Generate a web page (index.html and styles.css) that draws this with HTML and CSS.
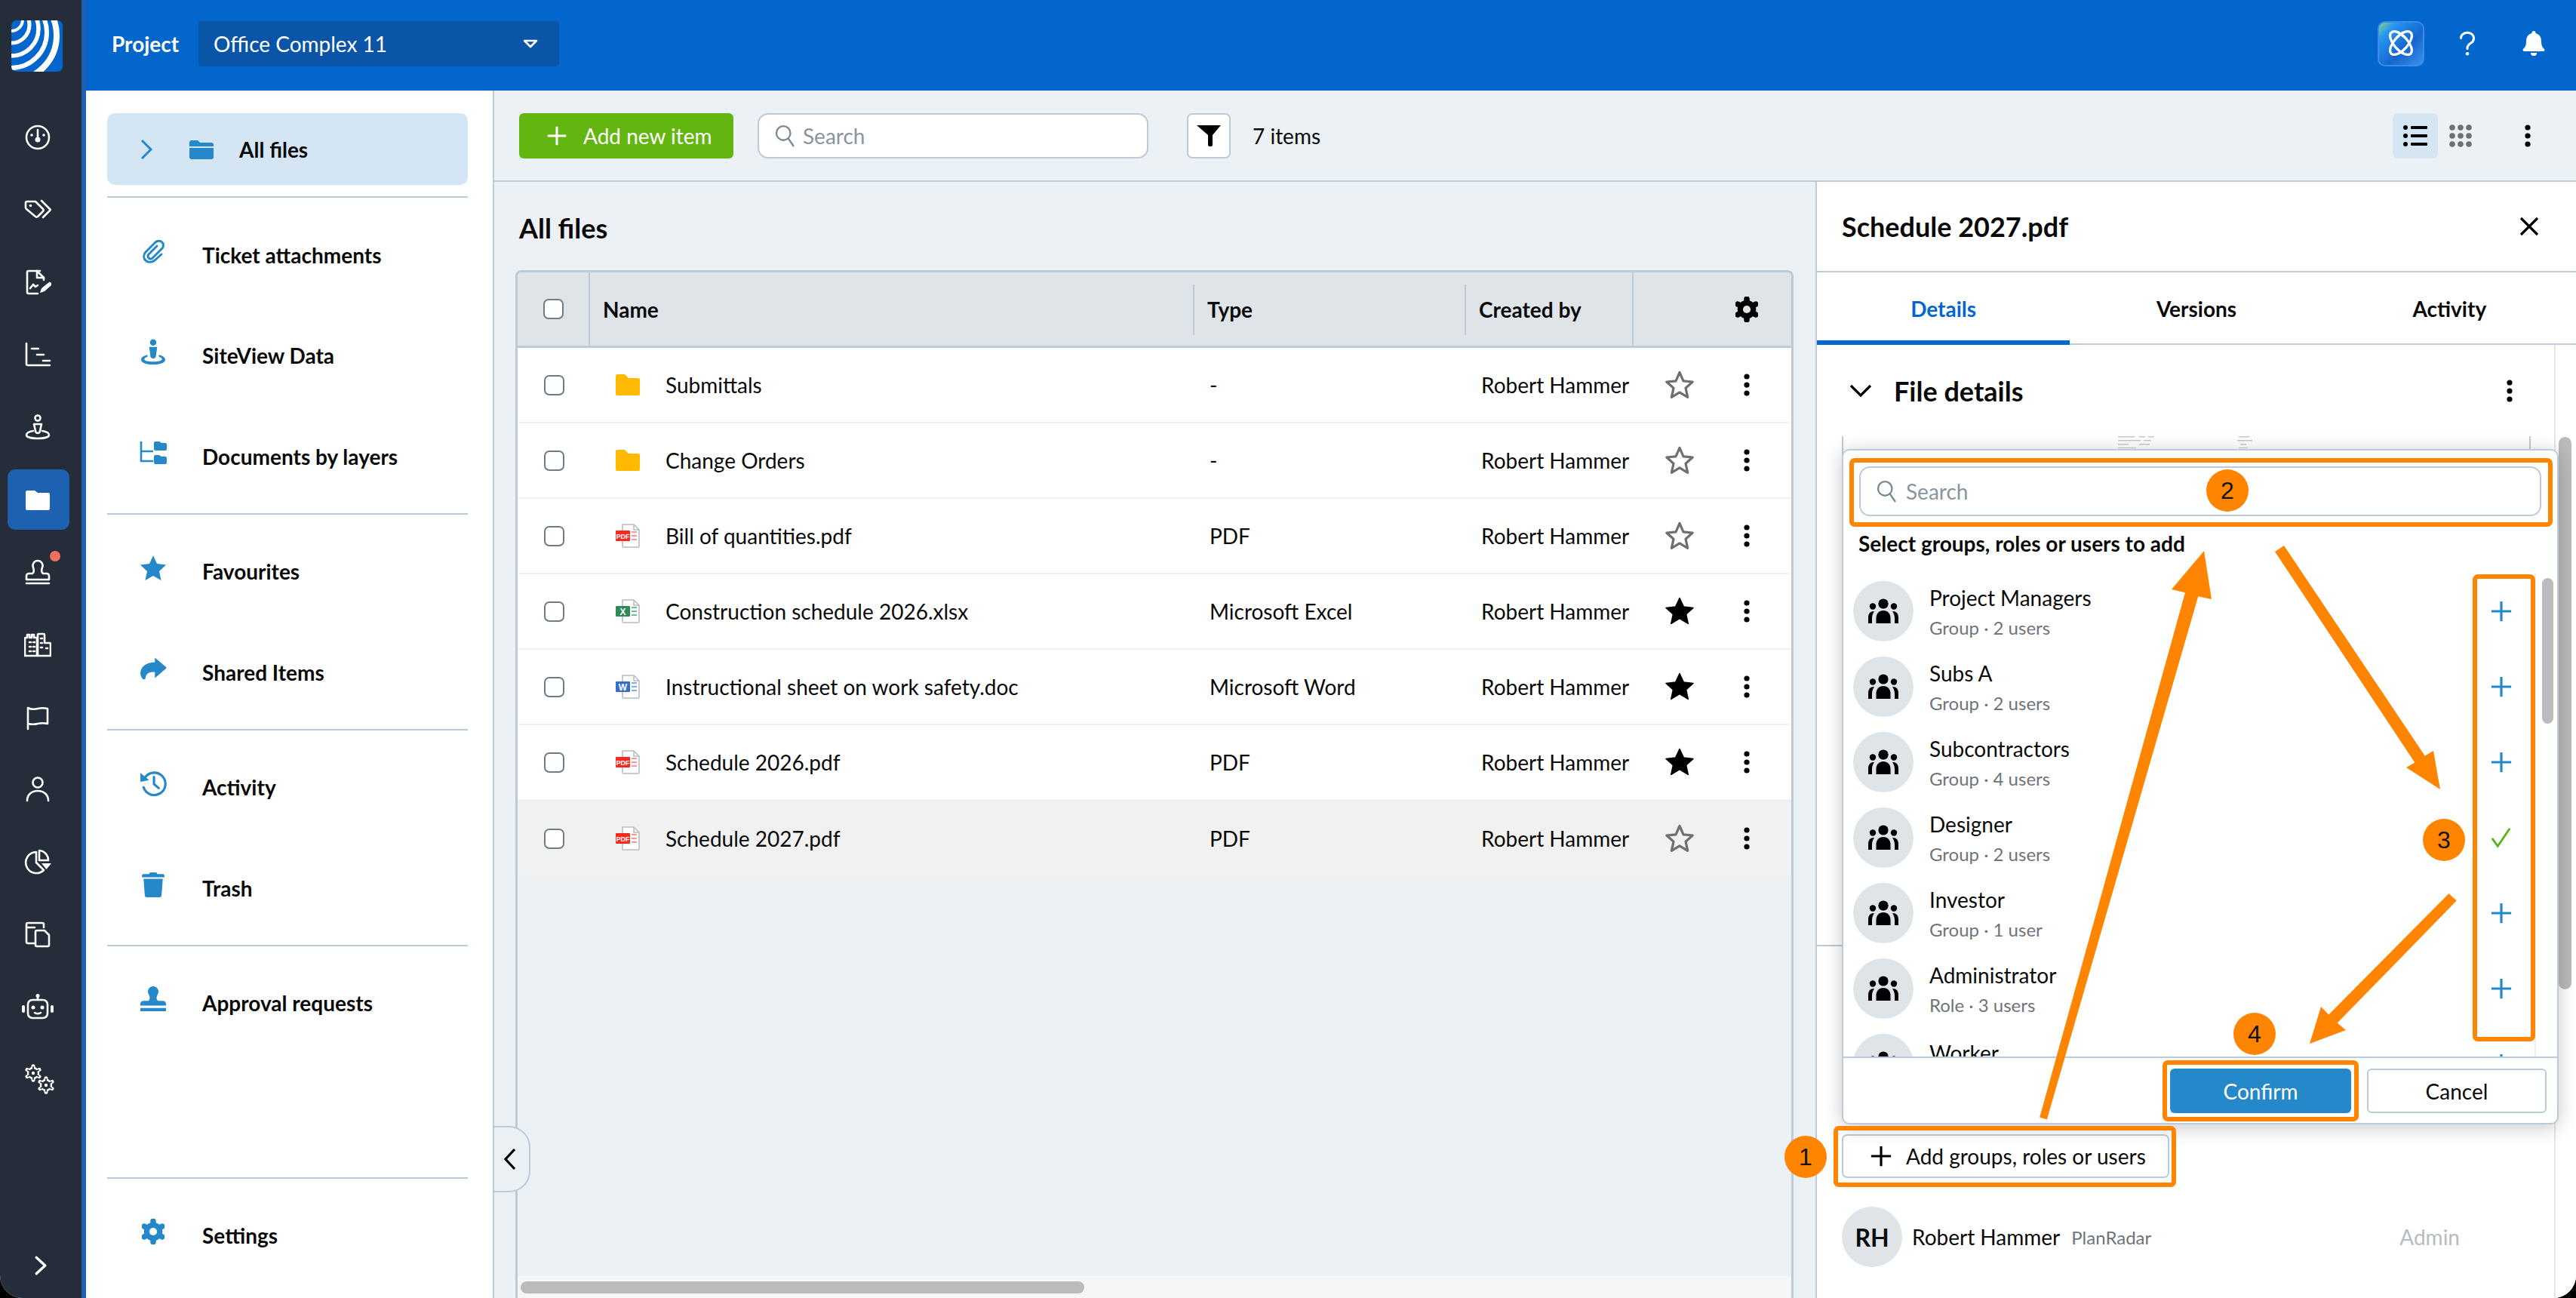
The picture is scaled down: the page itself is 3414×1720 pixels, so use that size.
FILE: index.html
```html
<!DOCTYPE html>
<html lang="en">
<head>
<meta charset="utf-8">
<title>All files</title>
<link rel="stylesheet" href="styles.css">
</head>
<body>
<svg class="defs" width="0" height="0" aria-hidden="true">
  <defs>
    <mask id="gear-hole"><rect width="24" height="24" fill="#fff"/><circle cx="12" cy="12" r="3.4" fill="#000"/></mask>
    <symbol id="gear" viewBox="0 0 24 24">
      <g mask="url(#gear-hole)">
        <circle cx="12" cy="12" r="8.2" fill="currentColor"/>
        <path d="M12 2.8v18.4M4 7.4l16 9.2M4 16.6l16-9.2" stroke="currentColor" stroke-width="5" stroke-linecap="round"/>
      </g>
    </symbol>
    <mask id="gear-line" maskUnits="userSpaceOnUse" x="0" y="0" width="24" height="24">
      <rect width="24" height="24" fill="#fff"/>
      <circle cx="12" cy="12" r="5.8" fill="#000"/>
      <path d="M12 4v16M5.100 8l13.800 8M5.100 16l13.800-8" stroke="#000" stroke-width="1.800" stroke-linecap="round"/>
      <circle cx="12" cy="12" r="2.200" fill="#fff"/>
    </mask>
    <symbol id="gear-o" viewBox="0 0 24 24">
      <g mask="url(#gear-line)">
        <circle cx="12" cy="12" r="8.2" fill="currentColor"/>
        <path d="M12 2.8v18.4M4 7.4l16 9.2M4 16.6l16-9.2" stroke="currentColor" stroke-width="5" stroke-linecap="round"/>
      </g>
    </symbol>
    <symbol id="kebab" viewBox="0 0 10 32"><circle cx="5" cy="5" r="3.6" fill="currentColor"/><circle cx="5" cy="16" r="3.6" fill="currentColor"/><circle cx="5" cy="27" r="3.6" fill="currentColor"/></symbol>
    <symbol id="star" viewBox="0 0 40 40"><path d="M20 3.5l5 11.3 12.2 1.2-9.2 8.2 2.7 12.1L20 29.9 9.3 36.3 12 24.2 2.8 16l12.2-1.2z" fill="none" stroke="currentColor" stroke-width="3.2" stroke-linejoin="round"/></symbol>
    <symbol id="star-f" viewBox="0 0 40 40"><path d="M20 2.5l5.4 11.6 12.6 1.3-9.4 8.5 2.7 12.5L20 29.6 8.7 36.4l2.7-12.5L2 15.4l12.6-1.3z" fill="currentColor" stroke="currentColor" stroke-width="1.5" stroke-linejoin="round"/></symbol>
    <symbol id="folder-y" viewBox="0 0 32 28"><path d="M0 2a2 2 0 0 1 2-2h10l5 5h13a2 2 0 0 1 2 2v19a2 2 0 0 1-2 2H2a2 2 0 0 1-2-2z" fill="#ffb900"/></symbol>
    <symbol id="doc" viewBox="0 0 32 32"><path d="M9 1h15l7 7v22a1 1 0 0 1-1 1H10a1 1 0 0 1-1-1z" fill="#fff" stroke="#b9bdc1" stroke-width="1.6"/><path d="M24 1v7h7" fill="none" stroke="#b9bdc1" stroke-width="1.6"/></symbol>
    <symbol id="plus" viewBox="0 0 32 32"><path d="M16 2v28M2 16h28" fill="none" stroke="currentColor" stroke-width="3.4"/></symbol>
    <symbol id="group" viewBox="0 0 40 34"><circle cx="20" cy="7" r="6.6" fill="currentColor"/><circle cx="6" cy="10.5" r="4.2" fill="currentColor"/><circle cx="34" cy="10.5" r="4.2" fill="currentColor"/><path d="M10.500 33v-7c0-6 4-10 9.500-10s9.500 4 9.500 10v7z" fill="currentColor"/><path d="M0 33v-7c0-6 2.500-9 8-9-1.600 2.500-3 5-3 9v7zM40 33v-7c0-6-2.500-9-8-9 1.600 2.500 3 5 3 9v7z" fill="currentColor"/></symbol>
    <symbol id="search" viewBox="0 0 30 34"><circle cx="13" cy="13" r="10.500" fill="none" stroke="currentColor" stroke-width="2.600"/><path d="M20.500 21L28 32" fill="none" stroke="currentColor" stroke-width="2.600" stroke-linecap="round"/></symbol>
  </defs>
</svg>

<div class="app">
  <nav class="rail">
    <svg class="logo" viewBox="0 0 68 68">
      <defs><clipPath id="logo-clip"><rect width="68" height="68" rx="7"/></clipPath></defs>
      <g clip-path="url(#logo-clip)">
        <rect width="68" height="68" fill="#0366cc"/>
        <g fill="none" stroke="#fff">
          <circle cx="0" cy="-1" r="15" stroke-width="4"/>
          <circle cx="0" cy="6" r="24" stroke-width="5"/>
          <circle cx="0" cy="11" r="36" stroke-width="5.500"/>
          <circle cx="0" cy="16" r="47" stroke-width="6"/>
          <circle cx="0" cy="20" r="60" stroke-width="8"/>
        </g>
      </g>
    </svg>
    <ul class="rail-list">
      <li class="rail-item"><svg class="ri" viewBox="0 0 36 36"><circle cx="18" cy="18" r="15"/><path d="M18 8v11"/><circle class="fl" cx="18" cy="21" r="3.500"/><circle class="fl" cx="10" cy="15" r="1.800"/><circle class="fl" cx="26" cy="15" r="1.800"/></svg></li>
      <li class="rail-item"><svg class="ri" viewBox="0 0 36 36"><path d="M2 9a2 2 0 0 1 2-2h11l10 10a2 2 0 0 1 0 3l-7 7a2 2 0 0 1-3 0L3 17a3 3 0 0 1-1-2z"/><path d="M23 6l12 12-10 10"/><circle class="fl" cx="8.500" cy="12.500" r="1.800"/></svg></li>
      <li class="rail-item"><svg class="ri" viewBox="0 0 36 36"><path d="M21 3H6a2 2 0 0 0-2 2v26a2 2 0 0 0 2 2h12"/><path d="M17 3v9h9L17 3"/><path d="M8 26l4-5 3 3 3-2"/><path class="fl" d="M21 32l2-6 10-8c2-1 4 2 3 4l-9 8z"/><path d="M26 12v3"/></svg></li>
      <li class="rail-item"><svg class="ri" viewBox="0 0 36 36"><path d="M3 3v27a2 2 0 0 0 2 2h29"/><path d="M10 10h9M17 18h9M25 26h9"/></svg></li>
      <li class="rail-item"><svg class="ri" viewBox="0 0 36 36"><circle cx="18" cy="6" r="3.500"/><path d="M13 14h10l-2 9a3 3 0 0 1-6 0z"/><path d="M12 23c-6 1-9 3-9 5.500 0 3 7 4.500 15 4.500s15-1.500 15-4.500c0-2.500-3-4.500-9-5.500"/></svg></li>
      <li class="rail-item rail-active"><svg class="ri" viewBox="0 0 36 36"><path class="fl" d="M2 8a2 2 0 0 1 2-2h10l4 3h14a2 2 0 0 1 2 2v19a2 2 0 0 1-2 2H4a2 2 0 0 1-2-2z"/></svg></li>
      <li class="rail-item"><svg class="ri" viewBox="0 0 36 36"><path d="M18 3a6.500 6.500 0 0 0-6 9c1 3 2 6-1 8H6a3 3 0 0 0-3 3v5h30v-5a3 3 0 0 0-3-3h-5c-3-2-2-5-1-8a6.500 6.500 0 0 0-6-9z"/><path d="M3 33h30"/></svg><span class="dot"></span></li>
      <li class="rail-item"><svg class="ri" viewBox="0 0 36 36"><path d="M1 33V10a1 1 0 0 1 1-1h2V5h3v4h3V5h3v4h3a1 1 0 0 1 1 1v23zM18 33V5a1 1 0 0 1 1-1h7a1 1 0 0 1 1 1v11h7a1 1 0 0 1 1 1v16z"/><path d="M7 15h2M12 15h2M7 21h2M12 21h2M7 27h2M12 27h2M22 10h2M22 16h2M22 22h2M29 23h2"/></svg></li>
      <li class="rail-item"><svg class="ri" viewBox="0 0 36 36"><path d="M5 34V6c4 2 9 2 13 1s9-1 13 0v20c-4-1-9-1-13 0s-9 1-13 0"/></svg></li>
      <li class="rail-item"><svg class="ri" viewBox="0 0 36 36"><circle cx="18" cy="9" r="6.500"/><path d="M4 33c0-8 6-13 14-13s14 5 14 13"/></svg></li>
      <li class="rail-item"><svg class="ri" viewBox="0 0 36 36"><path d="M16 5a14 14 0 1 0 10 24L16 19z"/><path d="M20 3a13 13 0 0 1 12 13H20z"/><path class="fl" d="M23 20h13l-6.500 8z"/></svg></li>
      <li class="rail-item"><svg class="ri" viewBox="0 0 36 36"><path d="M26 9V5a2 2 0 0 0-2-2H5a2 2 0 0 0-2 2v23a2 2 0 0 0 2 2h9"/><path d="M4 9h10"/><path d="M15 15a2 2 0 0 1 2-2h10l6 6v13a2 2 0 0 1-2 2H17a2 2 0 0 1-2-2z"/></svg></li>
      <li class="rail-item"><svg class="ri ri-bot" viewBox="0 0 44 36"><rect x="9" y="9" width="26" height="24" rx="6"/><circle class="fl" cx="22" cy="3.500" r="2.500"/><path d="M22 5v4"/><rect class="fl" x="1" y="16" width="4" height="10" rx="2"/><rect class="fl" x="39" y="16" width="4" height="10" rx="2"/><circle class="fl" cx="16" cy="19" r="2.500"/><circle class="fl" cx="28" cy="19" r="2.500"/><path d="M18 26c2 1.500 6 1.500 8 0"/></svg></li>
      <li class="rail-item rail-gears"><svg class="gear-a"><use href="#gear-o"/></svg><svg class="gear-b"><use href="#gear-o"/></svg></li>
    </ul>
    <div class="rail-foot"><svg class="ri" viewBox="0 0 36 36"><path d="M11 5l14 13-14 13"/></svg></div>
  </nav>
  <div class="strip"></div>

  <div class="workspace">
    <header class="topbar">
      <span class="proj-label">Project</span>
      <div class="proj-select">
        <span>Office Complex 11</span>
        <svg class="caret" viewBox="0 0 20 12"><path d="M2 2h16l-8 8z"/></svg>
      </div>
      <div class="top-actions">
        <div class="ai-btn">
          <svg viewBox="0 0 62 62"><g fill="none" stroke="#fff" stroke-width="3.600"><ellipse cx="31" cy="30" rx="21" ry="10" transform="rotate(48 31 30)"/><ellipse cx="31" cy="30" rx="21" ry="10" transform="rotate(-48 31 30)"/></g><path d="M27 14l7 6M34 14l-7 6" stroke="#fff" stroke-width="3"/></svg>
        </div>
        <svg class="top-q" viewBox="0 0 24 36"><path d="M3 10a9 8 0 1 1 14 7c-3 2-5 3.500-5 7v1" fill="none" stroke="#fff" stroke-width="3.200" stroke-linecap="round"/><circle cx="12" cy="32" r="2.400" fill="#fff"/></svg>
        <svg class="top-bell" viewBox="0 0 30 36"><path d="M15 1a2.500 2.500 0 0 1 2.500 3c5 1.500 7.500 5 7.500 11 0 6 2 8 4 10 1 1.500 0 3-1.500 3h-25C1 28 0 26.500 1 25c2-2 4-4 4-10 0-6 2.500-9.500 7.500-11A2.500 2.500 0 0 1 15 1zM11 30h8a4 4 0 0 1-8 0z" fill="#fff"/></svg>
      </div>
    </header>

    <div class="below">
      <aside class="side">
        <div class="side-active">
          <svg class="side-chev" viewBox="0 0 18 28"><path d="M3 2l12 12L3 26" fill="none" stroke="#2588c8" stroke-width="3"/></svg>
          <svg class="side-folder" viewBox="0 0 32 26"><path d="M0 4a3 3 0 0 1 3-3h8l3 3h15a3 3 0 0 1 3 3v2H0zM0 11h32v12a3 3 0 0 1-3 3H3a3 3 0 0 1-3-3z" fill="#2588c8"/></svg>
          <span>All files</span>
        </div>
        <div class="side-group">
          <div class="side-item"><svg class="si si-line" viewBox="0 0 32 34"><path d="M21 10L10 21c-3 4 2 8 5 5L28 13c5-6-3-13-9-8L6 18c-7 8 3 18 12 11l9-8"/></svg><span>Ticket attachments</span></div>
          <div class="side-item"><svg class="si" viewBox="0 0 32 32"><circle cx="16" cy="4.500" r="4"/><path d="M11 10h10l-1.500 11a3.500 3.500 0 0 1-7 0z"/><path d="M9 20c-5 1-8 3-8 6 0 4 7 6 15 6s15-2 15-6c0-3-3-5-8-6v2c2 .7 4 2 4 3.500 0 2-5 3-11 3s-11-1-11-3c0-1.500 2-2.800 4-3.500z"/></svg><span>SiteView Data</span></div>
          <div class="side-item"><svg class="si" viewBox="0 0 36 32"><path d="M2 1v26h16M2 14h16" fill="none" stroke="#2588c8" stroke-width="2.600"/><path d="M19 3a2 2 0 0 1 2-2h5l3 2h5a2 2 0 0 1 2 2v6a2 2 0 0 1-2 2H21a2 2 0 0 1-2-2zM19 21a2 2 0 0 1 2-2h5l3 2h5a2 2 0 0 1 2 2v6a2 2 0 0 1-2 2H21a2 2 0 0 1-2-2z"/></svg><span>Documents by layers</span></div>
        </div>
        <div class="side-group">
          <div class="side-item"><svg class="si" viewBox="0 0 36 34"><path d="M18 1l5 11 12 1.500-9 8.500 2.500 12L18 28 7.500 34 10 22l-9-8.500L13 12z"/></svg><span>Favourites</span></div>
          <div class="side-item"><svg class="si" viewBox="0 0 32 28"><path d="M18 1l13 11a1.500 1.500 0 0 1 0 2L18 25v-7C11 18 8 19 7 25c-.3 1.500-2 2.500-3.500 1C-2 20 1 7 18 6.500z"/></svg><span>Shared Items</span></div>
        </div>
        <div class="side-group">
          <div class="side-item"><svg class="si si-line" viewBox="0 0 34 32"><path d="M6 10a14 14 0 1 1-1 11"/><path class="si-fill" d="M1 3l11 9-11 2z"/><path d="M18 8v9l6 5"/></svg><span>Activity</span></div>
          <div class="side-item"><svg class="si" viewBox="0 0 28 32"><path d="M0 5a2 2 0 0 1 2-2h7a2 2 0 0 1 2-2h6a2 2 0 0 1 2 2h7a2 2 0 0 1 2 2v2H0zM2 9h24l-1.500 20a3 3 0 0 1-3 3h-15a3 3 0 0 1-3-3z"/></svg><span>Trash</span></div>
        </div>
        <div class="side-group">
          <div class="side-item"><svg class="si" viewBox="0 0 32 32"><path d="M16 0a6.500 6.500 0 0 0-5.500 10c1.500 3 2 6-.5 8H4a4 4 0 0 0-4 4v2h32v-2a4 4 0 0 0-4-4h-6c-2.500-2-2-5-.5-8A6.500 6.500 0 0 0 16 0zM0 27h32v4H0z"/></svg><span>Approval requests</span></div>
        </div>
        <div class="side-group side-bottom">
          <div class="side-item"><svg class="si si-gear"><use href="#gear"/></svg><span>Settings</span></div>
        </div>
      </aside>

      <main class="main">
        <div class="toolbar">
          <button class="add-btn"><svg class="btn-plus"><use href="#plus"/></svg><span>Add new item</span></button>
          <div class="search tb-search"><svg class="search-ico"><use href="#search"/></svg><span>Search</span></div>
          <div class="filter-btn"><svg viewBox="0 0 32 28"><path d="M0 0h32L21 13v13q0 2-2 2h-1q-3 0-3-2V13z" fill="#000"/></svg></div>
          <span class="count">7 items</span>
          <div class="tb-right">
            <div class="view-on"><svg viewBox="0 0 32 28"><g fill="#000"><circle cx="3" cy="3" r="3"/><circle cx="3" cy="14" r="3"/><circle cx="3" cy="25" r="3"/><rect x="10" y="1" width="22" height="4" rx="1"/><rect x="10" y="12" width="22" height="4" rx="1"/><rect x="10" y="23" width="22" height="4" rx="1"/></g></svg></div>
            <svg class="view-grid" viewBox="0 0 30 30"><g fill="#6f6f6f"><circle cx="4" cy="4" r="3.800"/><circle cx="15" cy="4" r="3.800"/><circle cx="26" cy="4" r="3.800"/><circle cx="4" cy="15" r="3.800"/><circle cx="15" cy="15" r="3.800"/><circle cx="26" cy="15" r="3.800"/><circle cx="4" cy="26" r="3.800"/><circle cx="15" cy="26" r="3.800"/><circle cx="26" cy="26" r="3.800"/></g></svg>
            <svg class="kebab tb-kebab"><use href="#kebab"/></svg>
          </div>
        </div>

        <div class="split">
          <section class="content">
            <h1 class="content-title">All files</h1>
            <div class="table">
              <div class="tr th">
                <div class="cell cell-check bar"><span class="cb"></span></div>
                <div class="cell cell-h"><b>Name</b><i class="sep"></i></div>
                <div class="cell cell-h"><b>Type</b><i class="sep"></i></div>
                <div class="cell cell-h bar"><b>Created by</b></div>
                <div class="cell cell-gear"><svg class="gear-h"><use href="#gear"/></svg></div>
              </div>
              <div class="tr">
                <div class="cell cell-check"><span class="cb"></span></div>
                <div class="cell cell-name"><svg class="ficon ficon-folder"><use href="#folder-y"/></svg><span>Submittals</span></div>
                <div class="cell cell-t">-</div>
                <div class="cell cell-t">Robert Hammer</div>
                <div class="cell cell-act"><svg class="star"><use href="#star"/></svg><svg class="kebab"><use href="#kebab"/></svg></div>
              </div>
              <div class="tr">
                <div class="cell cell-check"><span class="cb"></span></div>
                <div class="cell cell-name"><svg class="ficon ficon-folder"><use href="#folder-y"/></svg><span>Change Orders</span></div>
                <div class="cell cell-t">-</div>
                <div class="cell cell-t">Robert Hammer</div>
                <div class="cell cell-act"><svg class="star"><use href="#star"/></svg><svg class="kebab"><use href="#kebab"/></svg></div>
              </div>
              <div class="tr">
                <div class="cell cell-check"><span class="cb"></span></div>
                <div class="cell cell-name"><svg class="ficon" viewBox="0 0 32 32"><use href="#doc" width="32" height="32"/><rect y="9" width="19" height="14" rx="1" fill="#f5291e"/><text class="badge" x="9.500" y="19.500">PDF</text><path d="M21 11h7M21 16h7M21 21h7" stroke="#f27c75" stroke-width="1.600"/></svg><span>Bill of quantities.pdf</span></div>
                <div class="cell cell-t">PDF</div>
                <div class="cell cell-t">Robert Hammer</div>
                <div class="cell cell-act"><svg class="star"><use href="#star"/></svg><svg class="kebab"><use href="#kebab"/></svg></div>
              </div>
              <div class="tr">
                <div class="cell cell-check"><span class="cb"></span></div>
                <div class="cell cell-name"><svg class="ficon" viewBox="0 0 32 32"><use href="#doc" width="32" height="32"/><rect y="9" width="19" height="14" rx="1" fill="#2e8b57"/><text class="badge badge-l" x="9.500" y="20.500">X</text><path d="M21 11h7M21 16h7M21 21h7" stroke="#4aa76f" stroke-width="1.600"/></svg><span>Construction schedule 2026.xlsx</span></div>
                <div class="cell cell-t">Microsoft Excel</div>
                <div class="cell cell-t">Robert Hammer</div>
                <div class="cell cell-act"><svg class="star star-on"><use href="#star-f"/></svg><svg class="kebab"><use href="#kebab"/></svg></div>
              </div>
              <div class="tr">
                <div class="cell cell-check"><span class="cb"></span></div>
                <div class="cell cell-name"><svg class="ficon" viewBox="0 0 32 32"><use href="#doc" width="32" height="32"/><rect y="9" width="19" height="14" rx="1" fill="#3570c8"/><text class="badge badge-l" x="9.500" y="20.500">W</text><path d="M21 11h7M21 16h7M21 21h7" stroke="#5c93dd" stroke-width="1.600"/></svg><span>Instructional sheet on work safety.doc</span></div>
                <div class="cell cell-t">Microsoft Word</div>
                <div class="cell cell-t">Robert Hammer</div>
                <div class="cell cell-act"><svg class="star star-on"><use href="#star-f"/></svg><svg class="kebab"><use href="#kebab"/></svg></div>
              </div>
              <div class="tr">
                <div class="cell cell-check"><span class="cb"></span></div>
                <div class="cell cell-name"><svg class="ficon" viewBox="0 0 32 32"><use href="#doc" width="32" height="32"/><rect y="9" width="19" height="14" rx="1" fill="#f5291e"/><text class="badge" x="9.500" y="19.500">PDF</text><path d="M21 11h7M21 16h7M21 21h7" stroke="#f27c75" stroke-width="1.600"/></svg><span>Schedule 2026.pdf</span></div>
                <div class="cell cell-t">PDF</div>
                <div class="cell cell-t">Robert Hammer</div>
                <div class="cell cell-act"><svg class="star star-on"><use href="#star-f"/></svg><svg class="kebab"><use href="#kebab"/></svg></div>
              </div>
              <div class="tr tr-hover">
                <div class="cell cell-check"><span class="cb"></span></div>
                <div class="cell cell-name"><svg class="ficon" viewBox="0 0 32 32"><use href="#doc" width="32" height="32"/><rect y="9" width="19" height="14" rx="1" fill="#f5291e"/><text class="badge" x="9.500" y="19.500">PDF</text><path d="M21 11h7M21 16h7M21 21h7" stroke="#f27c75" stroke-width="1.600"/></svg><span>Schedule 2027.pdf</span></div>
                <div class="cell cell-t">PDF</div>
                <div class="cell cell-t">Robert Hammer</div>
                <div class="cell cell-act"><svg class="star"><use href="#star"/></svg><svg class="kebab"><use href="#kebab"/></svg></div>
              </div>
              <div class="h-scroll"><div class="h-thumb"></div></div>
            </div>
            <div class="collapse"><svg viewBox="0 0 18 30"><path d="M15 2L3 15l12 13" fill="none" stroke="#000" stroke-width="3.200"/></svg></div>
          </section>

          <aside class="panel">
            <div class="panel-head"><h2>Schedule 2027.pdf</h2><svg class="close" viewBox="0 0 26 26"><path d="M2 2l22 22M24 2L2 24" fill="none" stroke="#000" stroke-width="3.200"/></svg></div>
            <div class="tabs"><div class="tab tab-on">Details</div><div class="tab">Versions</div><div class="tab">Activity</div></div>
            <div class="panel-body">
              <div class="panel-scroll">
                <div class="details">
                  <div class="details-head">
                    <svg class="det-chev" viewBox="0 0 30 18"><path d="M2 2l13 13L28 2" fill="none" stroke="#000" stroke-width="3.200"/></svg>
                    <h3>File details</h3>
                    <svg class="kebab det-kebab"><use href="#kebab"/></svg>
                  </div>
                  <div class="preview">
                    <svg class="preview-ink" viewBox="0 0 200 16"><g fill="#c4cbd4"><rect x="0" y="0" width="22" height="1.500"/><rect x="28" y="0" width="8" height="1.500"/><rect x="40" y="0" width="8" height="1.500"/><rect x="0" y="5" width="30" height="1.500"/><rect x="34" y="5" width="10" height="1.500"/><rect x="0" y="10" width="14" height="1.500"/><rect x="28" y="10" width="14" height="1.500"/><rect x="0" y="15" width="24" height="1.500"/><rect x="160" y="0" width="14" height="1.500"/><rect x="158" y="5" width="20" height="1.500"/><rect x="162" y="10" width="8" height="1.500"/><rect x="160" y="15" width="12" height="1.500"/></g></svg>
                  </div>
                </div>
                <div class="access">
                  <button class="add-groups"><svg class="ag-plus"><use href="#plus"/></svg><span>Add groups, roles or users</span></button>
                  <div class="member">
                    <span class="avatar avatar-t">RH</span>
                    <span class="m-name">Robert Hammer</span>
                    <span class="m-org">PlanRadar</span>
                    <span class="m-role">Admin</span>
                  </div>
                </div>
              </div>
              <div class="v-track"><div class="v-thumb"></div></div>
            </div>

            <div class="popup">
              <div class="search pop-search"><svg class="search-ico"><use href="#search"/></svg><span>Search</span></div>
              <div class="pop-label">Select groups, roles or users to add</div>
              <div class="pop-list">
                <div class="pop-row"><span class="avatar"><svg class="gicon"><use href="#group"/></svg></span><div class="pop-txt"><div class="pop-name">Project Managers</div><div class="pop-sub">Group · 2 users</div></div><svg class="pop-plus"><use href="#plus"/></svg></div>
                <div class="pop-row"><span class="avatar"><svg class="gicon"><use href="#group"/></svg></span><div class="pop-txt"><div class="pop-name">Subs A</div><div class="pop-sub">Group · 2 users</div></div><svg class="pop-plus"><use href="#plus"/></svg></div>
                <div class="pop-row"><span class="avatar"><svg class="gicon"><use href="#group"/></svg></span><div class="pop-txt"><div class="pop-name">Subcontractors</div><div class="pop-sub">Group · 4 users</div></div><svg class="pop-plus"><use href="#plus"/></svg></div>
                <div class="pop-row"><span class="avatar"><svg class="gicon"><use href="#group"/></svg></span><div class="pop-txt"><div class="pop-name">Designer</div><div class="pop-sub">Group · 2 users</div></div><svg class="pop-check" viewBox="0 0 32 32"><path d="M3 17l8 11L28 3" fill="none" stroke="#5cb314" stroke-width="3"/></svg></div>
                <div class="pop-row"><span class="avatar"><svg class="gicon"><use href="#group"/></svg></span><div class="pop-txt"><div class="pop-name">Investor</div><div class="pop-sub">Group · 1 user</div></div><svg class="pop-plus"><use href="#plus"/></svg></div>
                <div class="pop-row"><span class="avatar"><svg class="gicon"><use href="#group"/></svg></span><div class="pop-txt"><div class="pop-name">Administrator</div><div class="pop-sub">Role · 3 users</div></div><svg class="pop-plus"><use href="#plus"/></svg></div>
                <div class="pop-row"><span class="avatar"><svg class="gicon"><use href="#group"/></svg></span><div class="pop-txt pop-txt-last"><div class="pop-name">Worker</div></div><svg class="pop-plus"><use href="#plus"/></svg></div>
              </div>
              <div class="pop-foot">
                <button class="btn-confirm">Confirm</button>
                <button class="btn-cancel">Cancel</button>
              </div>
            </div>
          </aside>
        </div>
      </main>
    </div>
  </div>

  <svg class="annot" viewBox="0 0 3414 1720">
    <g class="an-box">
      <rect x="2433" y="1495" width="448" height="75" rx="4"/>
      <rect x="2869" y="1408" width="254" height="75" rx="4"/>
      <rect x="3280" y="764" width="77" height="613" rx="4"/>
      <rect x="2454" y="610" width="926" height="85" rx="4"/>
    </g>
    <g class="an-fill">
      <polygon points="2703.200,1480.600 2896,785.200 2878,781 2921,730 2931,794 2913.300,790.200 2712.800,1483.400"/>
      <polygon points="3015,731 3200.300,1010.400 3189,1017 3234,1046 3225,995 3213.700,1001.600 3027,723"/>
      <polygon points="3245.500,1184 3086.300,1344.400 3076,1334 3061,1383 3109,1365 3097.700,1355.600 3255.700,1193.600"/>
      <circle cx="2393" cy="1533" r="28"/>
      <circle cx="2952" cy="650" r="28"/>
      <circle cx="3239" cy="1113" r="28"/>
      <circle cx="2988" cy="1370" r="28"/>
    </g>
    <g class="an-num">
      <text x="2393" y="1544">1</text>
      <text x="2952" y="661">2</text>
      <text x="3239" y="1124">3</text>
      <text x="2988" y="1381">4</text>
    </g>
  </svg>
</div>
</body>
</html>
```
FILE: styles.css
```css
* { box-sizing: border-box; }
html, body { margin: 0; padding: 0; background: #000; }
body { width: 3414px; height: 1720px; overflow: hidden; font-family: "Lato", "Liberation Sans", sans-serif; font-size: 28px; color: #0a0a0a; }
.defs { position: absolute; }
button { font-family: inherit; font-size: 28px; cursor: pointer; }
h1, h2, h3 { margin: 0; }

.app { position: relative; display: flex; width: 3414px; height: 1720px; border-radius: 0 0 30px 30px; overflow: hidden; background: #fff; }

/* rail */
.rail { flex: 0 0 108px; background: #252d3a; display: flex; flex-direction: column; padding-top: 27px; }
.logo { width: 68px; height: 68px; margin: 0 0 39px 15px; flex: none; }
.rail-list { list-style: none; margin: 0; padding: 0; width: 100%; }
.rail-item { position: relative; height: 96px; display: flex; align-items: center; justify-content: center; padding-right: 8px; }
.rail-active::before { content: ""; position: absolute; left: 10px; right: 16px; top: 8px; bottom: 8px; background: #1c62b0; border-radius: 10px; }
.ri { position: relative; width: 36px; height: 36px; fill: none; stroke: #fff; stroke-width: 2.6; stroke-linecap: round; stroke-linejoin: round; }
.ri .fl { fill: #fff; stroke: none; }
.ri-bot { width: 44px; }
.dot { position: absolute; left: 66px; top: 20px; width: 14px; height: 14px; border-radius: 50%; background: #f0705f; }
.rail-gears { color: #fff; }
.gear-a, .gear-b { position: absolute; width: 24px; height: 24px; }
.gear-a { left: 32px; top: 28px; }
.gear-b { left: 49px; top: 44px; }
.rail-foot { margin-top: auto; height: 80px; padding: 0 6px 7px 0; display: flex; align-items: center; justify-content: center; }
.rail-foot .ri { width: 30px; height: 30px; margin-left: 6px; stroke-width: 4; }
.strip { flex: 0 0 6px; background: #1c62b0; }

/* top */
.workspace { flex: 1; min-width: 0; display: flex; flex-direction: column; }
.topbar { flex: 0 0 120px; background: #0366cc; display: flex; align-items: center; padding: 0 0 4px 34px; color: #fff; }
.proj-label { font-weight: 700; width: 115px; }
.proj-select { width: 478px; height: 60px; background: #0a55a8; border-radius: 4px; display: flex; align-items: center; justify-content: space-between; padding: 0 28px 0 20px; }
.caret { width: 20px; height: 12px; fill: #0a55a8; stroke: #fff; stroke-width: 2.6; stroke-linejoin: round; }
.top-actions { margin-left: auto; display: flex; align-items: center; }
.ai-btn { width: 62px; height: 60px; border-radius: 10px; border: 2px solid #3d89ec; background: linear-gradient(135deg, #86d67a 0%, #2796f3 20%, #1566cc 60%, #3b90ee 100%); }
.ai-btn svg { width: 58px; height: 56px; display: block; }
.top-q { width: 24px; height: 34px; margin-left: 45px; }
.top-bell { width: 30px; height: 36px; margin: 0 41px 0 61px; }

.below { flex: 1; min-height: 0; display: flex; }

/* side */
.side { flex: 0 0 541px; border-right: 2px solid #bccbd9; padding: 30px 33px 16px 28px; display: flex; flex-direction: column; background: #fff; }
.side-active { flex: none; height: 95px; background: #d4e6f4; border-radius: 10px; display: flex; align-items: center; font-weight: 700; margin-bottom: 15px; }
.side-chev { width: 18px; height: 28px; margin-left: 43px; }
.side-folder { width: 32px; height: 26px; margin-left: 48px; }
.side-active span { margin-left: 34px; }
.side-group { border-top: 2px solid #bccbd9; padding: 9px 0 8px; }
.side-bottom { margin-top: auto; padding-bottom: 0; }
.side-item { height: 133.5px; display: flex; align-items: center; font-weight: 700; position: relative; padding-left: 126px; }
.si { position: absolute; left: 43px; top: 50%; width: 36px; height: 34px; margin-top: -22px; fill: #2588c8; }
.si-line { fill: none; stroke: #2588c8; stroke-width: 3; stroke-linecap: round; stroke-linejoin: round; }
.si-line .si-fill { fill: #2588c8; stroke: none; }
.si-gear { color: #2588c8; width: 36px; height: 36px; left: 43px; margin-top: -23px; }

/* main */
.main { flex: 1; min-width: 0; display: flex; flex-direction: column; background: #ecf1f5; }
.toolbar { flex: 0 0 121px; border-bottom: 2px solid #bccbd9; display: flex; align-items: center; padding-left: 33px; }
.add-btn { width: 284px; height: 60px; background: #63b610; color: #fff; border: 0; border-radius: 6px; display: flex; align-items: center; padding: 0 0 0 36px; }
.btn-plus { width: 28px; height: 28px; color: #fff; margin-right: 21px; }
.search { display: flex; align-items: center; background: #fff; border: 2px solid #bccbd9; border-radius: 14px; color: #8a959e; }
.search-ico { width: 28px; height: 30px; color: #7a8691; flex: none; }
.tb-search { width: 518px; height: 60px; margin-left: 32px; padding-left: 20px; }
.tb-search span { margin-left: 10px; }
.pop-search span { margin-left: 12px; }
.filter-btn { width: 58px; height: 60px; margin-left: 51px; background: #fff; border: 2px solid #bccbd9; border-radius: 7px; display: flex; align-items: center; justify-content: center; }
.filter-btn svg { width: 32px; height: 28px; }
.count { margin-left: 29px; }
.tb-right { margin-left: auto; display: flex; align-items: center; }
.view-on { width: 60px; height: 60px; background: #d4e6f4; border-radius: 7px; display: flex; align-items: center; justify-content: center; }
.view-on svg { width: 32px; height: 28px; }
.view-grid { width: 30px; height: 30px; margin-left: 15px; }
.kebab { width: 10px; height: 32px; color: #000; flex: none; }
.tb-kebab { margin: 0 59px 0 69px; }

.split { flex: 1; min-height: 0; display: flex; }
.content { position: relative; flex: 0 0 1751px; padding: 0 29px 0 28px; display: flex; flex-direction: column; }
.content-title { flex: 0 0 117px; font-size: 36px; font-weight: 700; display: flex; align-items: center; padding: 5px 0 0 5px; }
.table { flex: 1; min-height: 0; display: flex; flex-direction: column; border: solid #bccbd9; border-width: 3px 3px 0; border-radius: 8px 8px 0 0; }
.tr { display: grid; grid-template-columns: 96px 801px 360px 222px 1fr; height: 100px; background: #fff; border-bottom: 2px solid #f1f1f1; flex: none; }
.th { height: 100px; background: #dfe4e9; border-bottom: 3px solid #bccbd9; border-radius: 5px 5px 0 0; }
.tr-hover { background: #f1f1f1; border-bottom: 0; }
.cell { position: relative; display: flex; align-items: center; min-width: 0; }
.bar { border-right: 2px solid #bccbd9; }
.cell-check { justify-content: center; }
.cb { width: 27px; height: 27px; border: 2px solid #6f7c88; border-radius: 7px; background: #fff; }
.cell-h { padding-left: 17px; }
.cell-h b { font-weight: 700; }
.sep { position: absolute; right: 0; top: 16px; bottom: 14px; width: 2px; background: #bccbd9; }
.cell-gear { justify-content: flex-end; padding-right: 41px; }
.gear-h { width: 36px; height: 36px; color: #000; }
.cell-name { padding-left: 34px; }
.ficon { width: 32px; height: 32px; flex: none; margin-right: 34px; }
.ficon-folder { height: 28px; }
.badge { font: 700 9px "Liberation Sans", sans-serif; fill: #fff; text-anchor: middle; }
.badge-l { font-size: 12px; }
.cell-t { padding-left: 20px; white-space: nowrap; }
.cell-act { padding-left: 41px; }
.star { width: 40px; height: 40px; color: #6f6f6f; flex: none; }
.star-on { color: #000; }
.cell-act .kebab { margin-left: 64px; }
.h-scroll { margin-top: auto; flex: 0 0 29px; background: #f6f6f6; padding: 7px 0 0 4px; }
.h-thumb { width: 747px; height: 16px; background: #bbb; border-radius: 8px; }
.collapse { position: absolute; left: 0; top: 1251px; width: 48px; height: 88px; background: #ecf1f5; border: 2px solid #bccbd9; border-left: 0; border-radius: 0 28px 28px 0; display: flex; align-items: center; padding-left: 12px; }
.collapse svg { width: 18px; height: 30px; }

/* panel */
.panel { position: relative; flex: 1; min-width: 0; background: #fff; border-left: 2px solid #bccbd9; display: flex; flex-direction: column; }
.panel-head { flex: 0 0 120px; border-bottom: 2px solid #bccbd9; display: flex; align-items: center; justify-content: space-between; padding: 0 49px 0 33px; }
.panel-head h2 { font-size: 36px; font-weight: 700; }
.close { width: 26px; height: 26px; }
.tabs { flex: 0 0 96px; display: grid; grid-template-columns: repeat(3, 1fr); border-bottom: 2px solid #bccbd9; }
.tab { display: flex; align-items: center; justify-content: center; font-weight: 700; margin-bottom: -2px; }
.tab-on { color: #0366cc; border-bottom: 6px solid #0366cc; padding-top: 6px; }
.panel-body { flex: 1; min-height: 0; display: flex; }
.panel-scroll { flex: 1; min-width: 0; display: flex; flex-direction: column; }
.v-track { flex: 0 0 29px; border-left: 2px solid #e6e6e6; padding: 122px 0 0 4px; }
.v-thumb { width: 17px; height: 732px; background: #bbb; border-radius: 9px; }
.details { flex: 0 0 797px; border-bottom: 2px solid #bccbd9; display: flex; flex-direction: column; }
.details-head { flex: 0 0 121px; display: flex; align-items: center; padding-left: 43px; }
.details-head h3 { font-size: 36px; font-weight: 700; margin-left: 29px; }
.det-chev { width: 30px; height: 18px; }
.det-kebab { margin-left: auto; margin-right: 54px; }
.preview { flex: 1; margin: 0 31px 0 33px; border: solid #bccbd9; border-width: 0 2px; padding: 0 0 0 364px; }
.preview-ink { display: block; width: 200px; height: 16px; }
.access { padding: 249px 0 0 33px; }
.add-groups { width: 434px; height: 58px; background: #fff; border: 2px solid #bccbd9; border-radius: 7px; display: flex; align-items: center; padding: 0 0 0 35px; color: #0a0a0a; margin-bottom: 38px; }
.ag-plus { width: 30px; height: 30px; color: #000; margin-right: 18px; }
.member { display: flex; align-items: center; }
.avatar { width: 80px; height: 80px; border-radius: 50%; background: #dfe4e9; display: flex; align-items: center; justify-content: center; flex: none; }
.avatar-t { font-size: 32px; font-weight: 700; }
.m-name { margin-left: 13px; }
.m-org { margin-left: 15px; font-size: 24px; color: #6f7479; }
.m-role { margin-left: auto; margin-right: 125px; color: #b7bcc1; }

/* popup */
.popup { position: absolute; left: 33px; top: 354px; width: 950px; height: 895px; background: #fff; border: 2px solid #bccbd9; border-radius: 10px; box-shadow: 0 4px 26px rgba(0, 0, 0, .22); display: flex; flex-direction: column; }
.pop-search { flex: 0 0 66px; margin: 21px 21px 0; padding-left: 20px; }
.pop-label { flex: 0 0 76px; display: flex; align-items: center; padding: 0 0 4px 20px; font-weight: 700; }
.pop-list { position: relative; flex: 1; min-height: 0; overflow: hidden; border-right: 2px solid #efefef; margin-right: 28px; }
.pop-row { height: 100px; display: flex; align-items: center; padding: 0 29px 0 13px; }
.gicon { width: 40px; height: 34px; color: #000; }
.pop-txt { margin-left: 21px; padding-top: 2px; }
.pop-txt-last { height: 68px; }
.pop-name { line-height: 34px; }
.pop-sub { line-height: 30px; font-size: 24px; color: #6f7479; margin-top: 8px; }
.pop-plus { width: 30px; height: 30px; margin-left: auto; color: #2588c8; }
.pop-check { width: 30px; height: 30px; margin-left: auto; }
.popup::after { content: ""; position: absolute; right: 5px; top: 169px; width: 15px; height: 193px; border-radius: 8px; background: #bbb; }
.pop-foot { flex: 0 0 88px; border-top: 2px solid #bccbd9; display: flex; align-items: flex-start; justify-content: flex-end; gap: 21px; padding: 14px 14px 0 0; }
.btn-confirm { width: 240px; height: 59px; background: #2588c8; color: #fff; border: 0; border-radius: 6px; }
.btn-cancel { width: 238px; height: 59px; background: #fff; color: #0a0a0a; border: 2px solid #bccbd9; border-radius: 6px; }

/* annotations */
.annot { position: absolute; inset: 0; width: 3414px; height: 1720px; pointer-events: none; }
.an-box rect { fill: none; stroke: #ff8500; stroke-width: 6; }
.an-fill { fill: #ff8500; }
.an-num text { font: 32px "Liberation Sans", sans-serif; fill: #111; text-anchor: middle; }
```
